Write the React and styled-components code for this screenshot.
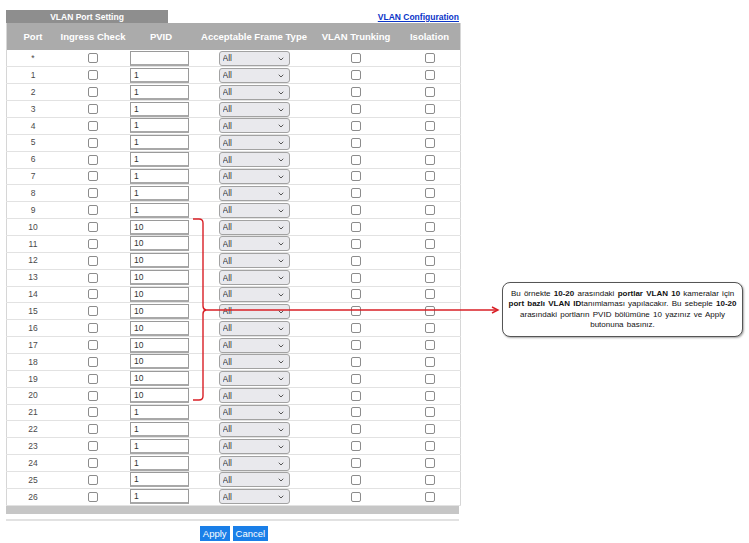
import React from 'react';
import styled, { createGlobalStyle } from 'styled-components';
import { ChevronDown } from 'lucide-react';

const GlobalStyle = createGlobalStyle`
  body {
    margin: 0;
    background: #fff;
    font-family: 'Liberation Sans', Arial, sans-serif;
  }
`;

const Page = styled.div`
  position: relative;
  width: 749px;
  height: 543px;
  box-sizing: border-box;
  padding: 10px 0 0 6px;
`;

const Panel = styled.div`
  width: 453px;
`;

const TopBar = styled.div`
  display: flex;
  justify-content: space-between;
  align-items: flex-end;
  height: 13px;
`;

const Tab = styled.div`
  width: 162px;
  height: 13px;
  background: #8e8e8e;
  color: #fff;
  font-size: 8.5px;
  font-weight: bold;
  display: flex;
  align-items: center;
  justify-content: center;
`;

const ConfigLink = styled.a`
  color: #0b35c8;
  font-size: 8.5px;
  font-weight: bold;
  text-decoration: underline;
  margin-bottom: 1px;
  cursor: pointer;
`;

const Table = styled.table`
  width: 453px;
  border-collapse: collapse;
  table-layout: fixed;
  border-left: 1px solid #d6d6d6;
  border-right: 1px solid #d6d6d6;
`;

const HeadCell = styled.th`
  height: 27px;
  padding: 0;
  background: #ababab;
  color: #fff;
  font-size: 9.5px;
  font-weight: bold;
  text-align: center;
  white-space: nowrap;
  width: ${props => props.w}px;
`;

const Row = styled.tr`
  height: 16.87px;
  border-bottom: 1px solid #e2e2e2;
`;

const Cell = styled.td`
  padding: 0;
  text-align: center;
  vertical-align: middle;
  font-size: 8.5px;
  color: #4a4a4a;
  line-height: 1;
`;

const Check = styled.input.attrs({ type: 'checkbox' })`
  appearance: none;
  display: block;
  margin: 0 auto;
  width: 10px;
  height: 10px;
  border: 1.5px solid #8c8c8c;
  border-radius: 2px;
  background: #fff;
  box-sizing: border-box;
`;

const Pvid = styled.input`
  display: block;
  width: 59px;
  height: 15px;
  margin: 0 0 0 3px;
  box-sizing: border-box;
  border: 1px solid #9a9a9a;
  border-bottom: 2px solid #a8a8a8;
  padding: 0 3px;
  font-family: 'Liberation Sans', Arial, sans-serif;
  font-size: 8.5px;
  color: #333;
  background: #fff;
  outline: none;
`;

const SelectWrap = styled.div`
  position: relative;
  width: 71px;
  height: 15px;
  margin: 0 auto;
`;

const Select = styled.select`
  appearance: none;
  display: block;
  width: 100%;
  height: 100%;
  box-sizing: border-box;
  border: 1px solid #a2a2a2;
  border-radius: 3px;
  background: #e9e9ed;
  padding: 0 0 0 3px;
  font-family: 'Liberation Sans', Arial, sans-serif;
  font-size: 8.5px;
  color: #333;
  outline: none;
`;

const Chevron = styled(ChevronDown)`
  position: absolute;
  right: 5px;
  top: 4px;
  pointer-events: none;
`;

const FooterBar = styled.div`
  height: 8px;
  background: #c6c6c6;
`;

const Rule = styled.div`
  height: 2px;
  background: #e2e2e2;
  margin-top: 5px;
`;

const Actions = styled.div`
  display: flex;
  justify-content: center;
  gap: 3px;
  margin-top: 5px;
  padding-left: 3px;
`;

const Button = styled.button`
  height: 15px;
  padding: 0 3px;
  border: none;
  background: #1a7fe8;
  color: #fff;
  font-family: 'Liberation Sans', Arial, sans-serif;
  font-size: 9.5px;
  line-height: 15px;
`;

const Overlay = styled.svg`
  position: absolute;
  left: 0;
  top: 0;
  pointer-events: none;
`;

const Callout = styled.div`
  position: absolute;
  left: 502px;
  top: 282px;
  width: 241px;
  height: 55px;
  box-sizing: border-box;
  border: 1.5px solid #555;
  border-radius: 8px;
  box-shadow: 1px 1px 2px rgba(0, 0, 0, 0.35);
  background: #fff;
  display: flex;
  align-items: center;
  justify-content: center;
  text-align: center;
  padding: 0 4px;
  font-size: 8px;
  line-height: 10.5px;
  color: #111;
  word-spacing: 1px;
`;

const columns = [
  { label: 'Port', w: 52 },
  { label: 'Ingress Check', w: 68 },
  { label: 'PVID', w: 68 },
  { label: 'Acceptable Frame Type', w: 118 },
  { label: 'VLAN Trunking', w: 86 },
  { label: 'Isolation', w: 61 },
];

const ports = ['*', ...Array.from({ length: 26 }, (_, i) => String(i + 1))];

const pvidFor = (port) => {
  if (port === '*') return '';
  const n = Number(port);
  return n >= 10 && n <= 20 ? '10' : '1';
};

const App = () => (
  <>
    <GlobalStyle />
    <Page>
      <Panel>
        <TopBar>
          <Tab>VLAN Port Setting</Tab>
          <ConfigLink>VLAN Configuration</ConfigLink>
        </TopBar>
        <Table>
          <thead>
            <tr>
              {columns.map(c => (
                <HeadCell key={c.label} w={c.w}>{c.label}</HeadCell>
              ))}
            </tr>
          </thead>
          <tbody>
            {ports.map(port => (
              <Row key={port}>
                <Cell>{port}</Cell>
                <Cell><Check /></Cell>
                <Cell><Pvid defaultValue={pvidFor(port)} /></Cell>
                <Cell>
                  <SelectWrap>
                    <Select defaultValue="All">
                      <option>All</option>
                      <option>Tag Only</option>
                      <option>Untag Only</option>
                    </Select>
                    <Chevron size={8} strokeWidth={3} color="#555" />
                  </SelectWrap>
                </Cell>
                <Cell><Check /></Cell>
                <Cell><Check /></Cell>
              </Row>
            ))}
          </tbody>
        </Table>
        <FooterBar />
        <Rule />
        <Actions>
          <Button>Apply</Button>
          <Button>Cancel</Button>
        </Actions>
      </Panel>

      <Overlay width="749" height="543" viewBox="0 0 749 543">
        <g fill="none" stroke="#d91f26" strokeWidth="1.4">
          <path d="M193 219 H199 Q203 219 203 223 V306 Q203 309.5 206 310 Q203 310.5 203 314 V396 Q203 400 199 400 H193" />
          <path d="M206 310 H497" />
          <path d="M492 307 L498 310 L492 313" />
        </g>
      </Overlay>

      <Callout>
        <div>
          Bu örnekte <b>10-20</b> arasındaki <b>portlar VLAN 10</b> kameralar için{' '}
          <b>port bazlı VLAN ID</b>tanımlaması yapılacakır. Bu sebeple <b>10-20</b>{' '}
          arasındaki portların PVID bölümüne 10 yazınız ve Apply butonuna basınız.
        </div>
      </Callout>
    </Page>
  </>
);

export default App;
